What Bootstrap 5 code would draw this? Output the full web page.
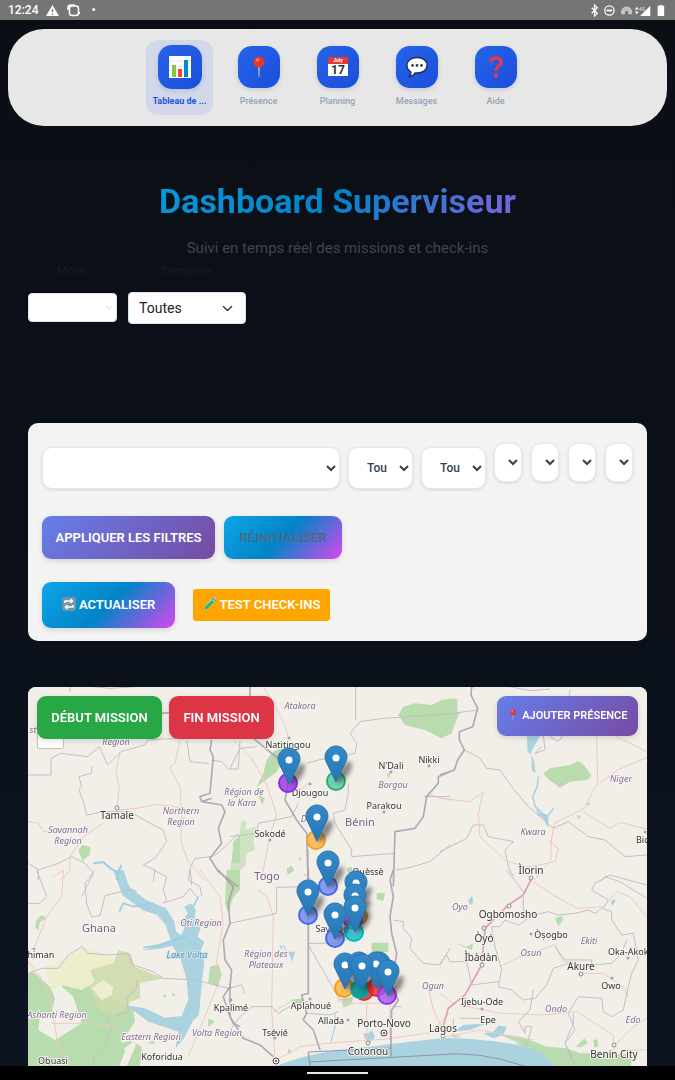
<!DOCTYPE html>
<html lang="fr">
<head>
<meta charset="utf-8">
<meta name="viewport" content="width=device-width, initial-scale=1">
<title>Dashboard Superviseur</title>
<link href="https://cdn.jsdelivr.net/npm/bootstrap@5.3.0/dist/css/bootstrap.min.css" rel="stylesheet">
<style>
body{font-family:Roboto,"Liberation Sans",sans-serif;background:linear-gradient(180deg,#0b0e15 0%,#0b1018 50%,#0c1422 100%);color:#1e293b}
.shell{min-height:100vh}
.statusbar{height:20px;background:#757575;color:#fff;font-size:12px;line-height:20px;font-weight:500}
.statusbar svg{height:13px}
.topnav{margin:9px 8px 0;height:97px;border-radius:36px;background:#e7e7e7;gap:12px;padding-top:11px}
.topnav a{width:67px;height:75px;padding-top:6px;border-radius:12px;text-decoration:none;color:#94a3b8;font-size:9px;line-height:12px;font-weight:500}
.topnav a.active{background:#d2d8ea;color:#1d56d8;font-weight:700;padding-top:5px}
.tile{width:42px;height:42px;border-radius:14px;background:linear-gradient(135deg,#2563eb,#1d4ed8);box-shadow:0 2px 5px rgba(30,60,120,.15);margin-bottom:7px}
.active .tile{width:44px;height:44px;margin-bottom:6px}
.tile svg{width:24px;height:24px}
.page{padding:0 28px}
.headline{margin-top:54px;font-size:34px;line-height:42px;font-weight:700;background:linear-gradient(135deg,#0ea5e9 0%,#0284c7 50%,#d946ef 100%);-webkit-background-clip:text;background-clip:text;color:transparent}
.tagline{margin:16px 0 0;font-size:15px;line-height:20px;color:#3f4553}
.period{gap:11px;margin-top:4px;height:62px;font-size:13px;line-height:18px;color:#15172b}
.period label{margin-bottom:12px;font-weight:500}
.month{width:89px}
.week{width:118px}
.period .form-select{height:32px;font-size:14px;line-height:18px;padding:5px 30px 5px 10px;border-radius:4px;border-color:#dee2e6;background-size:11px;background-position:right 12px center;color:#212529}
.period .month .form-select{height:29px;margin-top:1px;color:transparent;background-image:none}
.hint{position:absolute;right:4px;top:12px;width:8px;height:8px;pointer-events:none}
.filters{margin-top:99px;height:218px;background:#f3f3f3;border-radius:10px;padding:20px 14px 0}
.row-a{margin-top:27px;gap:9px}
.row-b{margin-top:23px;gap:18px}
.pick{border:1px solid #e5e8ee;border-radius:10px;background-color:#fff;box-shadow:0 1px 3px rgba(30,41,59,.15);color:#374151;font-size:12px;font-weight:500}
.pick-l{height:42px;margin-top:4px;padding:0 2px 0 14px}
.pick-m{width:65px}
.pick-s{width:28px;height:39px;padding:0}
.act{border:0;border-radius:9px;color:#fff;font-size:13px;line-height:18px;font-weight:600;padding:0;height:43px;white-space:nowrap;box-shadow:0 2px 5px rgba(30,41,59,.15)}
.act svg{width:14px;height:14px;vertical-align:-2px}
.violet{background:linear-gradient(135deg,#667eea,#764ba2)}
.ocean{background:linear-gradient(135deg,#0ea5e9 0%,#0284c7 50%,#d946ef 100%)}
.apply{width:173px}
.faded{color:#486a86;width:118px}
.refresh{height:46px;width:133px}
.probe{background:#ffa500;height:32px;border-radius:3px;width:137px;box-shadow:none}
.start{background:#28a745;width:125px}
.stop{background:#dc3545;width:105px}
.presence{font-size:11px;height:40px;width:141px}
.presence svg{width:12px;height:12px}
.mapbox{margin-top:46px;flex:1 1 379px;min-height:300px;border-radius:8px 8px 0 0;overflow:hidden;background:#f2efe9}
.mapbox>svg{position:absolute;inset:0;width:100%;height:100%}
.mapbtns{position:absolute;inset:9px 9px auto 9px;gap:7px}
.zoomctl{position:absolute;left:9px;top:34px;width:27px;height:28px;background:#fff;border:1px solid #c5c3c0;border-radius:2px}
.homebar{height:14px;background:#000}
.homebar span{width:61px;height:2px;background:#e8e8e8}
.map-text{font-family:"Noto Sans",sans-serif;text-anchor:middle;paint-order:stroke;stroke:#f7f5f1;stroke-width:2px;stroke-linejoin:round}
</style>
</head>
<body>
<svg width="0" height="0" class="position-absolute" aria-hidden="true">
<defs>
<linearGradient id="pinfill" x1="0" y1="0" x2="0" y2="1"><stop offset="0" stop-color="#3489c9"/><stop offset="1" stop-color="#2676b5"/></linearGradient>
<filter id="soft" x="-50%" y="-50%" width="200%" height="200%"><feGaussianBlur stdDeviation="2"/></filter>
<symbol id="pushpin" viewBox="0 0 24 24"><path d="M11 11h2l-.4 10-.6 2-.6-2z" fill="#9db4c6"/><circle cx="12" cy="7" r="5.500" fill="#e8352f"/><circle cx="10.500" cy="5" r="1.800" fill="#ff7a6b"/></symbol>
<g id="shade"><ellipse cx="8" cy="-10" rx="5" ry="12" transform="rotate(34 8 -10)" fill="#222" opacity=".5" filter="url(#soft)"/></g>
<g id="pin"><path d="M0-36C-6-36-11-31-11-25c0 2 .5 3.500 1.400 5.200L0 0l9.600-19.800C10.500-21.500 11-23 11-25c0-6-5-11-11-11z" fill="url(#pinfill)" stroke="#2c72aa" stroke-width="1"/><circle cy="-24" r="3.500" fill="#fff"/></g>
</defs>
</svg>
<div class="shell d-flex flex-column">
<header class="statusbar d-flex align-items-center justify-content-between px-2">
 <div class="d-flex align-items-center gap-2"><span>12:24</span>
  <svg viewBox="0 0 13 13" fill="#fff"><path d="M6.500 1 13 12H0z"/><path d="M6.500 5v3M6.500 9.500V11" stroke="#757575" stroke-width="1.300"/></svg>
  <svg viewBox="0 0 13 13" fill="none" stroke="#fff" stroke-width="1.500"><rect x="2.500" y="2" width="9" height="9.500" rx="2.500"/><path d="M1 6V3.500Q1 1 3.500 1H8M12.500 8v2"/></svg>
  <span>&nbsp;•</span></div>
 <div class="d-flex align-items-center">
  <svg viewBox="0 0 79 14" width="79" fill="none" stroke="#fff" stroke-width="1.300"><path d="M1 4l6 6-3 3V1l3 3-6 6"/><circle cx="20" cy="7" r="5"/><path d="M17 7h6" stroke-width="2"/><g stroke="#c9c9c9" stroke-width="2"><path d="M34 11a5 5 0 1 1 9 0M36 11a3 3 0 1 1 5 0"/></g><g fill="#fff" stroke="none"><path d="M47.500 6l2-3 2 3zM47.500 8l2 3 2-3zM64 2v11H53zM72 2h2V1h3v1h2v11h-7z"/><text x="52" y="7" font-size="5" fill="#ddd">4G</text></g></svg>
 </div>
</header>
<nav class="topnav d-flex justify-content-center align-items-start" aria-label="Navigation">
 <a href="#" class="active d-flex flex-column align-items-center"><span class="tile d-flex align-items-center justify-content-center"><svg viewBox="0 0 24 24"><path fill="#fff" d="M1 1h22v22H1z"/><path d="M1 6h22M1 11h22M1 16h22" stroke="#d7e4ea" stroke-width=".7"/><path fill="#8bc34a" d="M4 10h4v12H4z"/><path fill="#f44336" d="M10 14h4v8h-4z"/><path fill="#0288d1" d="M16 5h4v17h-4z"/></svg></span><span>Tableau de ...</span></a>
 <a href="#" class="d-flex flex-column align-items-center"><span class="tile d-flex align-items-center justify-content-center"><svg viewBox="0 0 24 24"><use href="#pushpin"/></svg></span><span>Présence</span></a>
 <a href="#" class="d-flex flex-column align-items-center"><span class="tile d-flex align-items-center justify-content-center"><svg viewBox="0 0 24 24"><path fill="#fff" d="M2 8h20v13H2z"/><path fill="#e53935" d="M2 2h20v7H2z"/><text x="12" y="7" font-size="5" font-weight="700" fill="#fff" text-anchor="middle">July</text><text x="12" y="19" font-size="12" font-weight="700" fill="#263238" text-anchor="middle">17</text></svg></span><span>Planning</span></a>
 <a href="#" class="d-flex flex-column align-items-center"><span class="tile d-flex align-items-center justify-content-center"><svg viewBox="0 0 24 24"><path d="M12 2.500c6 0 10 3.200 10 7.800s-4 7.700-10 7.700l-2-.1Q8 21.500 4.500 21.500 6 20 6 17C3.500 15.600 2 13.300 2 10.300 2 5.700 6 2.500 12 2.500z" fill="#fff" stroke="#1c2d57" stroke-width="1.300"/><g fill="#39475a"><circle cx="7.500" cy="10.500" r="1.400"/><circle cx="12" cy="10.500" r="1.400"/><circle cx="16.500" cy="10.500" r="1.400"/></g></svg></span><span>Messages</span></a>
 <a href="#" class="d-flex flex-column align-items-center"><span class="tile d-flex align-items-center justify-content-center"><svg viewBox="0 0 24 24" fill="none" stroke="#e03a4b" stroke-width="3.500"><path d="M7 7.500C7 4.500 9 3 12 3s5 1.500 5 4.500-5 4-5 8.500"/><circle cx="12" cy="20.500" r="2.200" fill="#e03a4b" stroke="none"/></svg></span><span>Aide</span></a>
</nav>
<main class="page d-flex flex-column flex-grow-1">
 <h1 class="headline text-center mb-0">Dashboard Superviseur</h1>
 <p class="tagline text-center">Suivi en temps réel des missions et check-ins</p>
 <div class="period d-flex align-items-start">
  <div class="month d-flex flex-column"><label for="mois" class="text-center">Mois:</label>
   <div class="position-relative"><select id="mois" class="form-select"><option></option></select><svg class="hint" viewBox="0 0 8 8" fill="none" stroke="#dcdfe3"><path d="M1 2l3 3 3-3"/></svg></div></div>
  <div class="week d-flex flex-column"><label for="semaine" class="text-center">Semaine:</label>
   <select id="semaine" class="form-select"><option>Toutes</option></select></div>
 </div>
 <section class="filters">
  <div class="d-flex align-items-start gap-2">
   <select class="pick pick-l flex-grow-1" aria-label="Agent"><option></option></select>
   <select class="pick pick-l pick-m" aria-label="Région"><option>Tou</option></select>
   <select class="pick pick-l pick-m" aria-label="Département"><option>Tou</option></select>
   <div class="d-flex" style="gap:9px">
    <select class="pick pick-s" aria-label="Commune"><option></option></select>
    <select class="pick pick-s" aria-label="Arrondissement"><option></option></select>
    <select class="pick pick-s" aria-label="Village"><option></option></select>
    <select class="pick pick-s" aria-label="Statut"><option></option></select>
   </div>
  </div>
  <div class="row-a d-flex">
   <button type="button" class="act violet apply">APPLIQUER LES FILTRES</button>
   <button type="button" class="act ocean faded">RÉINITIALISER</button>
  </div>
  <div class="row-b d-flex align-items-center">
   <button type="button" class="act ocean refresh"><svg viewBox="0 0 14 14"><rect width="14" height="14" rx="2" fill="#7295a8"/><path d="M3 6V4h7M8.500 2l2 2-2 2M11 8v2H4M5.500 8l-2 2 2 2" fill="none" stroke="#fff" stroke-width="1.500"/></svg> ACTUALISER</button>
   <button type="button" class="act probe"><svg viewBox="0 0 14 14"><path d="M11 2 3 11" stroke="#9bd8cf" stroke-width="4" stroke-linecap="round"/><path d="M9 5 3 11" stroke="#28b573" stroke-width="3" stroke-linecap="round"/><path d="m9 1 4 3" stroke="#56a6a0" stroke-width="1.500"/></svg> TEST CHECK-INS</button>
  </div>
 </section>
 <section class="mapbox position-relative" aria-label="Carte des missions">
 <svg viewBox="28 687 619 379" preserveAspectRatio="xMidYMin slice">
 <rect x="0" y="600" width="700" height="600" fill="#f2efe9"/>
 <!-- forests and parks -->
 <g fill="#b9dcae">
  <path transform="translate(230 680) scale(.3333)" d="M505 105l15-25 35-10 50 5 30-15 40-5 10 50-20 55-30 15-50-25-60-15zM110 240l20-25 30-15 5 35-25 40-40 30-20 15 20-40zM170 565l15-8 8 15-20 12zM350 565l15-5 5 20-15 2zM470 285l12-10-5 20zM205 530l10 5-6 10zM85 345l20 10-8 20z"/>
  <path transform="translate(230 680) scale(.3333)" opacity=".65" d="M35 420l15 5-5 25 30-10 10 20-15 20 5 30-25 10-5 40-25 15-10 35-12-5 5-60 10-25-5-35 20-20z"/>
  <path transform="translate(440 680) scale(.3333)" d="M0 175V90l25-32 28 0-3 50-25 45zM310 280l20-15 60-10 25-12 15 10 25 35-15 12-50 5-30 18-35-25zM435 368l15 0-3 12zM410 405l12 2-6 12z"/>
  <path transform="translate(20 680) scale(.3333)" d="M175 510l12-16 25 8-3 22-22 20zM640 490l20-25v85l-25 0z"/>
  <path transform="translate(20 870) scale(.3333)" d="M0 320l40-15 50 45 15 35-10 40-35 15-5 40 50 30 80-50-25-80-35-30 5-20 50 5 70 30 90 55 5 35-40 60 10 30-20 50-20 35H0zM225 570l40-40 55-15 10-15 5 20-30 20-40 20 0 30zM320 590l30-70 15 12-5 58zM620 0h40v60l-20 20-15 50-10-30zM570 290l25-8 10 30-10 40-30-15zM565 445l20 10-20 15zM300 430l40 0-30 20zM380 520l20-8 5 10zM50 150l15-15 15 10-20 10-5 25-10-8zM430 375l10 0-8 12zM455 370l12 3-8 8z"/>
  <path transform="translate(230 870) scale(.3333)" d="M0 0h15v80H0zM425 218l50 0v28h-50zM335 388l35-5-5 20-25 10zM180 390l35-5 20 20-25 10zM440 70l25-2-5 25-20-5z"/>
  <path transform="translate(440 870) scale(.3333)" d="M345 145l20-8 5 12-15 20zM50 220l30 10 20-10-5 20-25-10zM180 495l60 5 50 18 30 12 60 5 40 15 50 0 60 5 45-5-2 40H335l-50-50-50-22zM408 530l25-25 10 15-20 12zM460 510l12-2 3 20-12 5z"/>
 </g>
 <path transform="translate(20 870) scale(.3333)" fill="#cedaad" d="M215 290l65-10 15-40 35 10 15 40 85 35-70 15 0 45-30 10-10 25-50 15-30-15-35-70z" opacity=".9"/>
 <path transform="translate(20 870) scale(.3333)" fill="#eceecd" d="M70 290l60-20 60-40 90 30 0 20-70 20 15 35-40 25-60-15-30 15zM215 355l35-25 30 20-5 25-30 15z"/>
 <!-- water -->
 <g fill="#aad3df">
  <path d="M276 1066c28-11 52-15 83-18 40-5 80-10 93-10 25 1 55 4 75 9 14 3 20 10 28 19z"/>
  <path transform="translate(20 870) scale(.3333)" d="M280 0h30l18 50 50 40 60 25 25 40 5 30 15 10 10-20-5-20 15-25-10-20 20-10 15 20-5 30 20 20-10 30 20 15-12 30 12 30-8 70-8 90-20 20-25 50-25 30 8-50-30-10-60-20-40-30-30-20 60 10 60 28 50-5 20-50-5-60-18-60-25-40-40 8-50 6 50-20 35-12-15-45-25-30-45-15-60-45z"/>
  <path transform="translate(440 680) scale(.3333)" d="M260 165h42l-20 35-10 20 10 20 5 40-12-10 0-45-12-10z"/>
  <path transform="translate(440 680) scale(.3333)" d="M285 385l15 15 25 5 0 40-15-30-15-10z"/>
  <path transform="translate(440 870) scale(.3333)" d="M40 485l30-20 70-5-50 20zM130 490l30-5 15-18 25 3-10 25-30 10zM85 90l12-12 3 20-10 8zM512 95l10-8 5 5-10 15z"/>
  <path transform="translate(230 870) scale(.3333)" d="M400 490l15 0 10-10 10 20-15 18-15-10zM175 245l20 0-8 30zM148 225l10 5-3 10zM175 535l12 12-12 5z"/>
 </g>
 <g fill="none" stroke="#9dcde0">
  <path transform="translate(20 680) scale(.3333)" stroke-width="6" d="M220 550l30-4 20 18 25 16-5 20M295 575l10-20"/>
  <path transform="translate(440 680) scale(.3333)" stroke-width="4" d="M295 290l-3 30-14 30 8 30 20 20 15 10 20-25"/>
  <path transform="translate(20 870) scale(.3333)" stroke-width="5" d="M400 100l-60 10-30-10-12 25M500 200l-80 25-50 8M520 110l15-30"/>
  <path transform="translate(230 870) scale(.3333)" stroke-width="3" d="M315 430l0 40-12 45M160 225l10 20 20 15"/>
 </g>
 <!-- roads -->
 <g fill="none" stroke="#f3c6c1" stroke-width="3">
  <path transform="translate(20 680) scale(.3333)" d="M300 215l-12 60 10 50-8 65 60-5 60-12 75 10M480 180l-15 70-15 12 30 60 5 90-2 70 20 60 50 60M250 430l-60 40-40 60 0 40-25 30M25 425l30 5 15 25 60 0"/>
  <path transform="translate(230 680) scale(.3333)" d="M100 20l30 50 35 65 10 40M10 180l55 55 45 80 30 90-20 60-25 130M235 310l-30 25M600 345l60 15"/>
  <path transform="translate(440 680) scale(.3333)" d="M90 20l15 5M470 165l3 140-40 80-90 45-10 60 0 50-50 60M430 395l80 50 30-18 80 20M473 315l60-45 90-38M530 170l90 45M0 355l90 10 40-30-15 65 5 70 80 75 70 15 75-15 10-40-30-25"/>
  <path transform="translate(20 870) scale(.3333)" d="M100 20l30-20-5 80-45 60-35 90M20 270l40 50 30 60 10 60 15 90 40 60M95 460l90 0 85 5 60 40 50 50 50 20M540 0l60 80 10 80-20 110 5 70-40 100-50 120"/>
  <path transform="translate(230 870) scale(.3333)" d="M85 60l25 20 20 60-5 280 10 150M130 425l60-35M140 570l70-40 100-12 150-10 140-20 60-60M320 390l20 10 60 0 80 0 0 110M410 400l0 110M595 350l15 70 30 60"/>
  <g transform="translate(440 870) scale(.3333)"><path d="M280 35l60 40 70 40 80-5 40-45 40 15 50 60M0 370l40 30M180 290l60-30 105-35 25 50 60 10M430 310l60 0 60 40 15 30M60 405l120 25 130 5 100-10 110 70 5 90M525 525l20-20 30-30 45-30M545 540l75 0M20 500l100-20 160 30"/><path stroke="#e49eaf" stroke-width="5" d="M275 25l-25 50-45 30-70 70-10 110-50 90-50 40-20 70"/></g>
 </g>
 <!-- regional and national borders -->
 <g fill="none" stroke="#c6bdc6" stroke-width="3" stroke-linejoin="round">
  <path transform="translate(20 680) scale(.3333)" d="M25 285h68v-50l30-15 80 10 35-30 25 55 40-40 70-20 10-15 85-5M215 260l0 20-38 10 8 30-8 10 15 40 8 35 50-10 80 0 60 35 40 20 10 35-35 50-35 20 35 15-5 35M25 550l30 20 0 30M55 570l60-20 40-20 40 20 25 30-35 70M500 180l10 65 55 5M575 240l30 5 20 22 30 0 5-85M655 460l-50 50-25 20M575 530l-50 5-15 30 5 50M220 20l50 5 80-5M150 20v15M510 15l45 5 105 0"/>
  <path transform="translate(230 680) scale(.3333)" d="M0 265l30-60 50-5M0 470l80-10 5-30 100-20 20-40M230 250l35-10 60-10 50-10 5-30-20-30 30-35 70-10 230-15M377 20v100M355 310l0 30-10 50-35 10 5 30 50 80 0 20 130-10M235 510l0 90M220 580l30 25M500 570l30-5 70-20 60-50M660 350l-80 0"/>
  <path transform="translate(440 680) scale(.3333)" d="M0 515l80-40 20-40 30 0 15 35 75 15-25 25 10 50 15 30M0 105l115-15M75 210l45 25 20 30 40 5 35 50 50 60 75 65 45-20 60 45 50 10 60 50 65-5M210 20l60 12 60-5M385 70l5-40M310 165l5 45-30 10 20-20M330 170l25 15 15-20M480 605l15-15 45 15 80 50"/>
  <path transform="translate(20 870) scale(.3333)" d="M25 310l40-15 50 0 30-40 40-25 20 20 60 5 60-5 15 35 60 20 30 20 95 5 100 25 40-10 10 25M50 0l30 80-20 20-35 0M225 0l-30 40 5 60 15 40 25-3 15-60 60-15 35 0M400 0l40 20-10 40 10 30-10 10 60-20 20-25 20 25M350 330l0 25-30 30 5 40-60 20-5 10 15 10-15 50-35 40-15 60M510 0l-5 30 35 20 5 30"/>
  <path transform="translate(230 870) scale(.3333)" d="M0 160l70-15 70-15 0-78 90-2M235 220l95 0 40-25M235 225l95 165 30-5 60-35 80 0M230 430l70 5 25-10M0 480l30-40 35-30 60 0 20 20 50-30 40-5M490 150l30 5 0 20 25 30-5 30 40 45 50 5 30-50M490 410l25 0"/>
  <path transform="translate(440 870) scale(.3333)" d="M200 0l50 65 0 55 15 20 60-15 30 10 50-5 40-10 20 10 20-15 30 10 0 25 30 45 35-5 15 80-20 40-10 40-15 70-35 20-25-15-5-40-70-5-30 50 20 50-30 40 30 60M265 145l-30 20-40-15-15 20-25 0 10 60 20 70-10 50 40 10 35 30 35-5 35-40 20-50 50-15M345 230l30 40 80 0 0 15 60-5 30-30 15-40M0 280l20-25 10 20 50 0 15 70 80-10M280 360l-10 60-35 35 20 35 0-20 20 0-15 60-30-10M400 430l0 30-25 60 25 60M60 500l-20 0 0-55M60 445h80M455 60l10-20 45-25 110 30M455 60l50 30-15 25"/>
 </g>
 <g fill="none" stroke="#a695aa" stroke-width="5" opacity=".8" stroke-linejoin="round">
  <path transform="translate(230 680) scale(.3333)" d="M60 20l0 45-10 40M70 175l80 65 25 70-10 50 35 60 30 40 5 165M660 275l-35 15 0 20-35 40-10 60-25 35-60 10-5 165"/>
  <path transform="translate(440 680) scale(.3333)" d="M95 20l-2 25 20 40-15 55-40 15 0 25 15 30-20 30-10 30-43 15"/>
  <path transform="translate(20 680) scale(.3333)" d="M575 180l-5 30 10 20-10 110-30 10 5 15 60 10 10 20-20 50 10 45-35 45 25 40 60 45M545 365l30-10M425 100l50-5"/>
  <path transform="translate(20 870) scale(.3333)" d="M595 0l45 50-15 50 5 60-20 50 5 60 20 30-5 50-20 30 20 60 10 20 20 10"/>
  <path transform="translate(230 870) scale(.3333)" d="M235 0v370l-20 5 15 55-10 20 30 30 20 60M490 0l-10 30 10 50-10 60 5 50 15 60-15 100 20 40-20 30-2 60 0 80M0 340l0 100 40 65 50 20 40 35M235 545l5 45"/>
 </g>
 <g fill="none" stroke="#8d93ad" stroke-width="1"><path d="M309 1052l82-4M309 1062l125-7q45-5 90 11"/></g>
 <!-- town markers -->
 <g fill="#f7f5f1" stroke="#888" stroke-width="1"><circle cx="117" cy="808" r="2"/><circle cx="289" cy="738" r="1"/><circle cx="391" cy="772" r="1"/><circle cx="429" cy="766" r="1"/><circle cx="384" cy="812" r="1"/><circle cx="270" cy="840" r="1"/><circle cx="310" cy="784" r="1"/><circle cx="531" cy="878" r="2"/><circle cx="509" cy="906" r="2"/><circle cx="484" cy="928" r="2"/><circle cx="482" cy="965" r="2"/><circle cx="581" cy="974" r="2"/><circle cx="531" cy="934" r="1"/><circle cx="612" cy="978" r="1"/><circle cx="628" cy="958" r="1"/><circle cx="614" cy="1045" r="2"/><circle cx="34" cy="949" r="1"/><circle cx="231" cy="1000" r="1"/><circle cx="310" cy="999" r="1"/><circle cx="348" cy="1020" r="1"/><circle cx="275" cy="1038" r="1"/><circle cx="368" cy="1043" r="2"/><circle cx="443" cy="1036" r="2"/><circle cx="482" cy="1009" r="1"/><circle cx="645" cy="832" r="1"/><g stroke="#444"><circle cx="276" cy="1061" r="3"/><circle cx="384" cy="1033" r="3"/></g></g>
 <g fill="#444"><circle cx="276" cy="1061" r="1"/><circle cx="384" cy="1033" r="1"/></g>
 <!-- place names -->
 <g class="map-text" font-size="9" fill="#333">
  <text x="288" y="748">Natitingou</text><text x="391" y="769">N'Dali</text><text x="429" y="763">Nikki</text><text x="384" y="809">Parakou</text><text x="310" y="796">Djougou</text><text x="270" y="837">Sokodé</text><text x="368" y="875">Ouèssè</text><text x="332" y="932">Savalou</text>
  <text x="311" y="1009">Aplahoué</text><text x="331" y="1024">Allada</text><text x="275" y="1036">Tsévié</text><text x="231" y="1011">Kpalimé</text><text x="162" y="1060">Koforidua</text><text x="53" y="1064">Obuasi</text><text x="34" y="958">Techiman</text><text x="551" y="938">Òṣogbo</text><text x="631" y="955">Oka-Akoko</text><text x="611" y="989">Owo</text><text x="482" y="1005">Ijebu-Ode</text><text x="488" y="1023">Epe</text><text x="636" y="843" style="text-anchor:start">Bida</text>
 </g>
 <g class="map-text" font-size="10" fill="#333">
  <text x="117" y="819">Tamale</text><text x="531" y="874">Ìlorin</text><text x="508" y="918">Ogbomosho</text><text x="484" y="942">Òyó</text><text x="481" y="961">Ìbàdàn</text><text x="581" y="970">Akure</text><text x="614" y="1058">Benin City</text><text x="384" y="1027">Porto-Novo</text><text x="368" y="1055">Cotonou</text><text x="443" y="1032">Lagos</text>
 </g>
 <g class="map-text" font-size="11" fill="#785d84"><text x="99" y="932">Ghana</text><text x="267" y="880">Togo</text><text x="360" y="826">Bénin</text></g>
 <g class="map-text" font-size="9" font-style="italic" fill="#836b93">
  <text x="116" y="745">Region</text><text x="300" y="709">Atakora</text><text x="393" y="788">Borgou</text><text x="244" y="795">Région de</text><text x="242" y="806">la Kara</text><text x="181" y="814">Northern</text><text x="181" y="825">Region</text><text x="68" y="833">Savannah</text><text x="68" y="844">Region</text><text x="201" y="926">Oti Region</text><text x="266" y="957">Région des</text><text x="266" y="968">Plateaux</text><text x="57" y="1018">Ashanti Region</text><text x="151" y="1040">Eastern Region</text><text x="217" y="1036">Volta Region</text><text x="621" y="782">Niger</text><text x="533" y="835">Kwara</text><text x="460" y="910">Oyo</text><text x="531" y="956">Osun</text><text x="589" y="944">Ekiti</text><text x="433" y="989">Ogun</text><text x="556" y="1012">Ondo</text><text x="633" y="1023">Edo</text><text x="314" y="822">Donga</text><text x="33" y="733">st</text>
 </g>
 <text class="map-text" x="187" y="958" font-size="9" font-style="italic" fill="#5b95bd" style="stroke:#cfe4ea">Lake Volta</text>
 <!-- check-in zones -->
 <g stroke-width="2" fill-opacity=".8">
  <circle cx="288" cy="783" r="9" fill="#9333ea" stroke="#8b2fe0"/><circle cx="336" cy="781" r="9" fill="#54c79a" stroke="#22b07d"/><circle cx="316" cy="840" r="9" fill="#fbb040" stroke="#f0a030"/>
  <g fill="#6b86ee" stroke="#4468e8"><circle cx="328" cy="886" r="9"/><circle cx="308" cy="915" r="9"/><circle cx="335" cy="938" r="9"/></g>
  <circle cx="358" cy="916" r="9" fill="#e58a2a" stroke="#e58a2a"/><circle cx="353" cy="920" r="9" fill="#9333ea" stroke="#8b2fe0"/><circle cx="354" cy="932" r="9" fill="#12b9c4" stroke="#0bb"/>
  <circle cx="344" cy="988" r="9" fill="#fbb040" stroke="#f59e0b"/><circle cx="364" cy="991" r="9" fill="#d22" stroke="#d33"/><circle cx="360" cy="989" r="9" fill="#149a96" stroke="#14a39a" fill-opacity="1"/><circle cx="377" cy="987" r="9" fill="#e02a30" stroke="#dc2626"/><circle cx="387" cy="995" r="9" fill="#a855f7" stroke="#9333ea"/>
 </g>
 <g><use href="#shade" x="289" y="784"/><use href="#shade" x="336" y="782"/><use href="#shade" x="317" y="841"/><use href="#shade" x="328" y="887"/><use href="#shade" x="308" y="916"/><use href="#shade" x="356" y="907"/><use href="#shade" x="355" y="920"/><use href="#shade" x="355" y="932"/><use href="#shade" x="335" y="939"/><use href="#shade" x="345" y="989"/><use href="#shade" x="362" y="990"/><use href="#shade" x="376" y="988"/><use href="#shade" x="388" y="996"/></g>
 <g><use href="#pin" x="289" y="784"/><use href="#pin" x="336" y="782"/><use href="#pin" x="317" y="841"/><use href="#pin" x="328" y="887"/><use href="#pin" x="356" y="907"/><use href="#pin" x="308" y="916"/><use href="#pin" x="355" y="920"/><use href="#pin" x="355" y="932"/><use href="#pin" x="335" y="939"/><use href="#pin" x="379" y="988"/><use href="#pin" x="376" y="988"/><use href="#pin" x="345" y="989"/><use href="#pin" x="359" y="988"/><use href="#pin" x="362" y="990"/><use href="#pin" x="388" y="996"/></g>
 </svg>
 <div class="zoomctl"></div>
 <div class="mapbtns d-flex align-items-start">
  <button type="button" class="act start">DÉBUT MISSION</button>
  <button type="button" class="act stop">FIN MISSION</button>
  <button type="button" class="act violet presence ms-auto"><svg viewBox="0 0 24 24"><use href="#pushpin"/></svg> AJOUTER PRÉSENCE</button>
 </div>
 </section>
</main>
<footer class="homebar d-flex justify-content-center align-items-center"><span></span></footer>
</div>
<script src="https://cdn.jsdelivr.net/npm/bootstrap@5.3.0/dist/js/bootstrap.bundle.min.js"></script>
</body>
</html>
